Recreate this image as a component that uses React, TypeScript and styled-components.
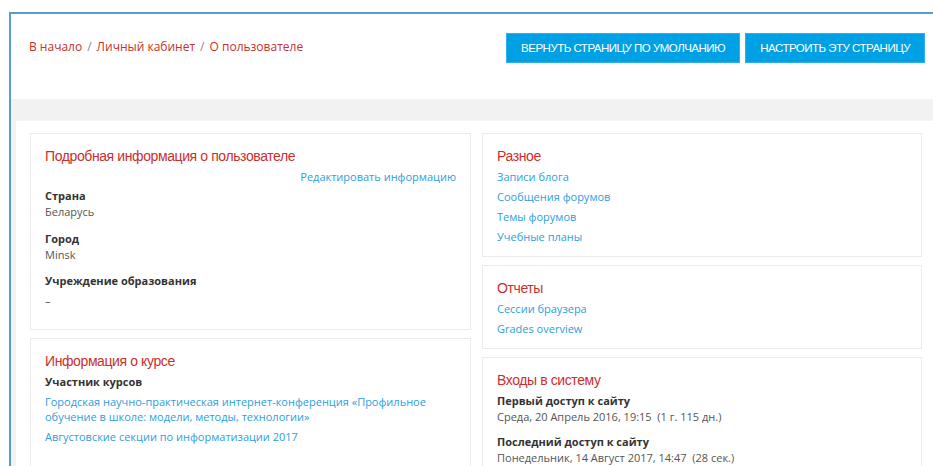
import React from "react";
import styled, { createGlobalStyle } from "styled-components";

const Global = createGlobalStyle`
  html, body { margin: 0; padding: 0; background: #fff; }
  body { font-family: "Open Sans", "Liberation Sans", sans-serif; font-size: 11px; color: #555; overflow: hidden; }
  * { box-sizing: border-box; }
`;

const Outer = styled.div`
  padding: 12px 0 0 9px;
`;

const Frame = styled.div`
  border-top: 2px solid #5b9bd5;
  border-left: 2px solid #5b9bd5;
`;

const Header = styled.header`
  height: 85px;
  display: flex;
  align-items: flex-start;
  justify-content: space-between;
  padding: 19px 8px 0 18px;
`;

const Crumbs = styled.nav`
  display: flex;
  gap: 5px;
  margin-top: 6px;
  font-size: 12px;
  line-height: 16px;
  color: #c9302c;
`;

const Sep = styled.span`
  color: #888;
`;

const Actions = styled.div`
  display: flex;
  gap: 5px;
`;

const Button = styled.button`
  height: 30px;
  padding: 0 14px;
  border: 1px solid #2fb0ea;
  background: #00a1e4;
  color: #fff;
  font-family: "Liberation Sans", Arial, sans-serif;
  font-size: 11.5px;
  letter-spacing: -0.5px;
  text-transform: uppercase;
  white-space: nowrap;
`;

const Shade = styled.div`
  background: #f2f2f2;
  padding: 21px 0 0 5px;
`;

const Panel = styled.main`
  background: #fff;
  border-top: 1px solid #f7f7f7;
  padding: 12px 11px 0 14px;
  display: grid;
  grid-template-columns: 441px 440px;
  column-gap: 11px;
  align-items: start;
`;

const Column = styled.div`
  display: flex;
  flex-direction: column;
  gap: 8px;
`;

const Card = styled.section<{ $h: number }>`
  border: 1px solid #ebebeb;
  padding: 12px 14px 0 14px;
  height: ${(p) => p.$h}px;
  display: flex;
  flex-direction: column;
`;

const Title = styled.h3`
  margin: 0 0 3px;
  font-family: "Liberation Sans", Arial, sans-serif;
  font-weight: normal;
  font-size: 14px;
  letter-spacing: -0.4px;
  line-height: 20px;
  color: #c9302c;
`;

const EditRow = styled.div`
  display: flex;
  justify-content: flex-end;
`;

const Link = styled.span`
  display: block;
  color: #2d9ee0;
  line-height: 16px;
  & + & { margin-top: 4px; }
`;

const Field = styled.div<{ $gap?: number }>`
  margin-top: ${(p) => p.$gap ?? 0}px;
`;

const Label = styled.div`
  font-weight: bold;
  color: #333;
  line-height: 16px;
`;

const Value = styled.div<{ $gap?: number }>`
  color: #555;
  line-height: 16px;
  margin-top: ${(p) => p.$gap ?? 0}px;
`;

const Courses = styled.div`
  margin-top: 4px;
  padding-right: 8px;

  ${Link} {
    line-height: 15px;
  }
  ${Link} + ${Link} {
    margin-top: 5px;
  }
`;

export default function App() {
  return (
    <>
      <Global />
      <Outer>
        <Frame>
          <Header>
            <Crumbs>
              <span>В начало</span>
              <Sep>/</Sep>
              <span>Личный кабинет</span>
              <Sep>/</Sep>
              <span>О пользователе</span>
            </Crumbs>
            <Actions>
              <Button>Вернуть страницу по умолчанию</Button>
              <Button>Настроить эту страницу</Button>
            </Actions>
          </Header>
          <Shade>
            <Panel>
              <Column>
                <Card $h={197}>
                  <Title>Подробная информация о пользователе</Title>
                  <EditRow>
                    <Link>Редактировать информацию</Link>
                  </EditRow>
                  <Field $gap={3}>
                    <Label>Страна</Label>
                    <Value>Беларусь</Value>
                  </Field>
                  <Field $gap={11}>
                    <Label>Город</Label>
                    <Value>Minsk</Value>
                  </Field>
                  <Field $gap={10}>
                    <Label>Учреждение образования</Label>
                    <Value $gap={4}>–</Value>
                  </Field>
                </Card>
                <Card $h={140}>
                  <Title>Информация о курсе</Title>
                  <Label>Участник курсов</Label>
                  <Courses>
                    <Link>
                      Городская научно-практическая интернет-конференция «Профильное обучение в школе: модели, методы, технологии»
                    </Link>
                    <Link>Августовские секции по информатизации 2017</Link>
                  </Courses>
                </Card>
              </Column>
              <Column>
                <Card $h={124}>
                  <Title>Разное</Title>
                  <Link>Записи блога</Link>
                  <Link>Сообщения форумов</Link>
                  <Link>Темы форумов</Link>
                  <Link>Учебные планы</Link>
                </Card>
                <Card $h={84}>
                  <Title>Отчеты</Title>
                  <Link>Сессии браузера</Link>
                  <Link>Grades overview</Link>
                </Card>
                <Card $h={140}>
                  <Title>Входы в систему</Title>
                  <Field>
                    <Label>Первый доступ к сайту</Label>
                    <Value>Среда, 20 Апрель 2016, 19:15&nbsp; (1 г. 115 дн.)</Value>
                  </Field>
                  <Field $gap={9}>
                    <Label>Последний доступ к сайту</Label>
                    <Value>Понедельник, 14 Август 2017, 14:47&nbsp; (28 сек.)</Value>
                  </Field>
                </Card>
              </Column>
            </Panel>
          </Shade>
        </Frame>
      </Outer>
    </>
  );
}
